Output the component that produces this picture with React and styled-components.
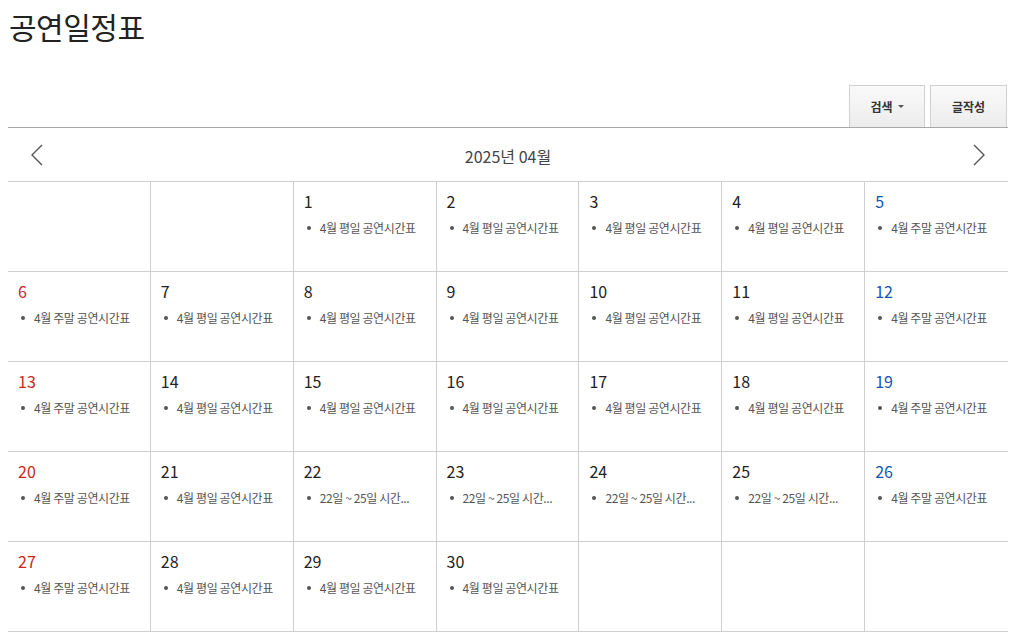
import React from 'react'
import styled, { createGlobalStyle } from 'styled-components'

const GlobalStyle = createGlobalStyle`
  body {
    margin: 8px;
    background: #FFFFFF;
    font-family: "Noto Sans CJK KR", "Noto Sans", sans-serif;
    color: #222;
  }
`

const Wrap = styled.div`
  width: 1000px;
`

const Title = styled.h1`
  margin: 0;
  padding-left: 1px;
  font-size: 30px;
  font-weight: 400;
  line-height: 36px;
  color: #222;
  letter-spacing: -0.5px;
`

const Toolbar = styled.div`
  display: flex;
  justify-content: flex-end;
  gap: 5px;
  margin-top: 41px;
  padding-right: 1px;
  border-bottom: 1px solid #a8a8a8;
`

const Button = styled.button`
  width: ${p => p.w}px;
  height: 42px;
  display: flex;
  align-items: center;
  justify-content: center;
  gap: 5px;
  border: 1px solid #d0d0d0;
  border-bottom: none;
  background: linear-gradient(#fafafa, #ececec);
  font-family: inherit;
  font-size: 12px;
  font-weight: 700;
  color: #333;
  cursor: pointer;
`

const Caret = styled.span`
  width: 0;
  height: 0;
  border-left: 3px solid transparent;
  border-right: 3px solid transparent;
  border-top: 3px solid #555;
`

const Nav = styled.div`
  height: 53px;
  display: flex;
  align-items: center;
  justify-content: space-between;
  padding: 0 22px;
  border-bottom: 1px solid #cfcfcf;
`

const Arrow = styled.button`
  border: none;
  background: none;
  padding: 0;
  display: flex;
  cursor: pointer;
`

const Month = styled.div`
  font-size: 16px;
  color: #444;
  margin-top: 2px;
`

const Grid = styled.div`
  display: grid;
  grid-template-columns: repeat(7, 1fr);
`

const Cell = styled.div`
  height: 90px;
  box-sizing: border-box;
  padding: 8px 6px 0 10px;
  border-bottom: 1px solid #cfcfcf;
  border-right: ${p => (p.last ? 'none' : '1px solid #cfcfcf')};
  min-width: 0;
`

const DayNum = styled.div`
  font-size: 16px;
  line-height: 22px;
  color: ${p => (p.tone === 'sun' ? '#c8281e' : p.tone === 'sat' ? '#1254b4' : '#222')};
`

const Event = styled.div`
  display: flex;
  align-items: center;
  gap: 9px;
  margin-top: 7px;
  padding-left: 3px;
  font-size: 12px;
  line-height: 18px;
  letter-spacing: -0.4px;
  color: #555;
  white-space: nowrap;
`

const Dot = styled.span`
  flex: none;
  width: 4px;
  height: 4px;
  border-radius: 50%;
  background: #555;
`

const Chevron = ({ dir }) => (
  <svg width='14' height='22' viewBox='0 0 14 22'>
    <polyline
      points={dir === 'left' ? '12,1 2,11 12,21' : '2,1 12,11 2,21'}
      fill='none'
      stroke='#555'
      strokeWidth='1.4'
    />
  </svg>
)

const eventFor = (d, dow) => {
  if (d >= 22 && d <= 25) return '22일 ~ 25일 시간...'
  if (dow === 0 || dow === 6) return '4월 주말 공연시간표'
  return '4월 평일 공연시간표'
}

// April 2025 starts on Tuesday
const cells = []
for (let i = 0; i < 35; i++) {
  const d = i - 1
  cells.push(d >= 1 && d <= 30 ? d : null)
}

export default () => (
  <Wrap>
    <GlobalStyle />
    <Title>공연일정표</Title>
    <Toolbar>
      <Button w={76}>검색 <Caret /></Button>
      <Button w={77}>글작성</Button>
    </Toolbar>
    <Nav>
      <Arrow aria-label='이전 달'><Chevron dir='left' /></Arrow>
      <Month>2025년 04월</Month>
      <Arrow aria-label='다음 달'><Chevron dir='right' /></Arrow>
    </Nav>
    <Grid>
      {cells.map((d, i) => {
        const dow = i % 7
        const tone = dow === 0 ? 'sun' : dow === 6 ? 'sat' : ''
        return (
          <Cell key={i} last={dow === 6}>
            {d && (
              <>
                <DayNum tone={tone}>{d}</DayNum>
                <Event>
                  <Dot />
                  <span>{eventFor(d, dow)}</span>
                </Event>
              </>
            )}
          </Cell>
        )
      })}
    </Grid>
  </Wrap>
)
